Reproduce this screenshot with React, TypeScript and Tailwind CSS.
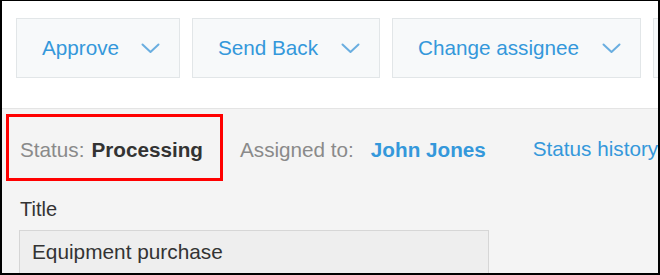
import React from "react";

function Chevron() {
  return (
    <svg width="19" height="11" viewBox="0 0 19 11" fill="none" className="shrink-0">
      <polyline points="1.5,1.5 9.5,9 17.5,1.5" stroke="#6aaee0" strokeWidth="2" strokeLinecap="round" strokeLinejoin="round" />
    </svg>
  );
}

function ActionButton({ label, width }: { label: string; width: string }) {
  return (
    <div
      className={`${width} h-[60px] shrink-0 flex items-center justify-between pl-[25px] pr-[19px] bg-[#f7f9fa] border border-[#e2e6e8] text-[#3498db] text-[20.7px]`}
    >
      <span className="leading-none">{label}</span>
      <Chevron />
    </div>
  );
}

export default function App() {
  return (
    <div
      className="w-[660px] h-[275px] overflow-hidden border-t border-x-2 border-b-2 border-black bg-[#f4f4f4] flex flex-col"
      style={{ fontFamily: '"Liberation Sans", Arial, sans-serif' }}
    >
      <div className="h-[108px] shrink-0 bg-white border-b border-[#e4e4e4] pt-[17px] pl-[14px] flex gap-[12px] overflow-hidden">
        <ActionButton label="Approve" width="w-[164px]" />
        <ActionButton label="Send Back" width="w-[188px]" />
        <ActionButton label="Change assignee" width="w-[249px]" />
        <div className="w-[100px] shrink-0 h-[60px] bg-[#f7f9fa] border border-[#e2e6e8]" />
      </div>
      <div className="flex-1 flex flex-col pl-[4px]">
        <div className="flex items-center mt-[5px] whitespace-nowrap text-[20.7px]">
          <div className="w-[217px] h-[67px] shrink-0 border-[3px] border-[#ff0000] flex items-center pl-[11px] pt-[4px]">
            <span className="text-[#8a8a8a]">Status:</span>
            <span className="ml-[7px] font-bold text-[#333333]">Processing</span>
          </div>
          <div className="ml-[17px] flex items-center pt-[5px]">
            <span className="text-[#8a8a8a]">Assigned to:</span>
            <span className="ml-[17px] font-bold text-[#3498db]">John Jones</span>
          </div>
          <span className="ml-[47px] pt-[2px] text-[#3498db]">Status history</span>
        </div>
        <div className="mt-[16px] ml-[14px] text-[20px] text-[#333333] leading-[24px]">Title</div>
        <div className="mt-[9px] ml-[13px] w-[470px] flex-1 bg-[#eeeeee] border border-[#d6d6d6] border-b-0 pl-[12px] pt-[9px] text-[20.8px] text-[#333333] leading-[24px]">
          Equipment purchase
        </div>
      </div>
    </div>
  );
}
